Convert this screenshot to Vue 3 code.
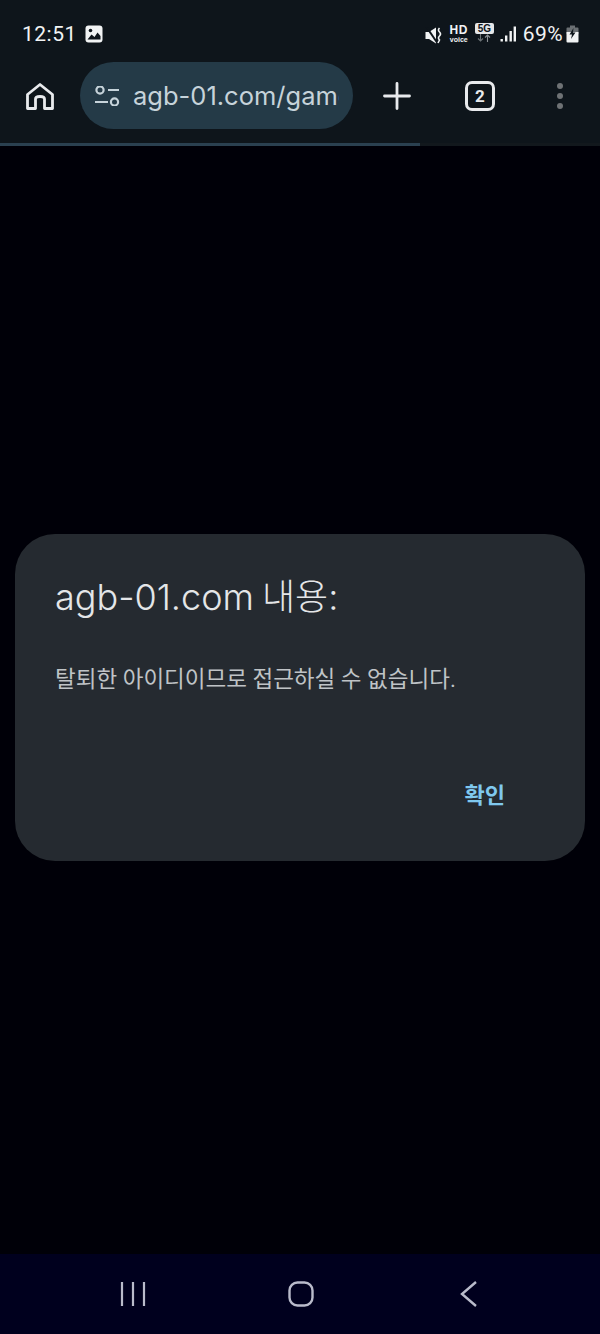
<template>
  <div class="screen">
    <header class="chrome">
      <!-- Status bar -->
      <div class="status-bar">
        <div class="status-left">
          <span class="clock">12:51</span>
          <svg class="gallery" width="18" height="18" viewBox="0 0 18 18">
            <rect x="0.5" y="0.5" width="17" height="17" rx="3" fill="#f1f3f4" />
            <circle cx="5.5" cy="5.5" r="1.8" fill="#0e151b" />
            <path d="M2.5 14.5 L6.5 9.5 L9.5 12 L12.5 7.5 L15.5 11 V14.5 Z" fill="#0e151b" />
          </svg>
        </div>
        <div class="status-right">
          <svg class="mute" width="17" height="17" viewBox="0 0 17 17">
            <path d="M0.5 5 H4 L11 0.5 V16.5 L4 12 H0.5 Z" fill="#f1f3f4" />
            <path d="M1.5 0 L12 15.5" stroke="#0e151b" stroke-width="2" />
            <path d="M14.5 1 Q12.5 3 14.5 5 T14.5 9 T14.5 13 L13 16" stroke="#f1f3f4" stroke-width="1.6" fill="none" />
          </svg>
          <div class="hd">
            <span class="hd-top">HD</span>
            <span class="hd-bottom">voice</span>
          </div>
          <div class="net">
            <span class="net-label">5G</span>
            <svg width="16" height="8" viewBox="0 0 16 8">
              <path d="M4.5 0 V7 M2 4.5 L4.5 7 L7 4.5" stroke="#6c7276" stroke-width="1.1" fill="none" />
              <path d="M11.5 8 V1 M9 3.5 L11.5 1 L14 3.5" stroke="#8b9094" stroke-width="1.1" fill="none" />
            </svg>
          </div>
          <svg class="signal" width="16" height="16" viewBox="0 0 16 16">
            <rect x="0.5" y="13" width="2.4" height="2.5" fill="#f1f3f4" />
            <rect x="5" y="9.5" width="2.4" height="6" fill="#f1f3f4" />
            <rect x="9.5" y="5" width="2.4" height="10.5" fill="#f1f3f4" />
            <rect x="13.6" y="0.5" width="2.4" height="15" fill="#f1f3f4" />
          </svg>
          <span class="percent">69%</span>
          <svg class="battery" width="13" height="18" viewBox="0 0 13 18">
            <path d="M4 0.5 H9 V2.5 H11.5 Q12.5 2.5 12.5 3.5 V9 H0.5 V3.5 Q0.5 2.5 1.5 2.5 H4 Z" fill="#6a6f73" />
            <path d="M0.5 7 H12.5 V16.5 Q12.5 17.5 11.5 17.5 H1.5 Q0.5 17.5 0.5 16.5 Z" fill="#f1f3f4" />
            <path d="M7.5 3 L3.5 9.5 H6 L5 14 L9.5 7.5 H7 Z" fill="#0e151b" />
          </svg>
        </div>
      </div>

      <!-- Browser toolbar -->
      <div class="toolbar">
        <svg class="home" width="30" height="30" viewBox="0 0 30 30">
          <path d="M15 3.5 L27.5 13.5 V27.5 H19.5 V18 Q19.5 15.5 15 15.5 Q10.5 15.5 10.5 18 V27.5 H2.5 V13.5 Z" fill="none" stroke="#e8eaed" stroke-width="2.8" stroke-linejoin="round" />
        </svg>
        <div class="omnibox">
          <svg width="26" height="20" viewBox="0 0 26 20">
            <circle cx="6" cy="4" r="3.6" fill="none" stroke="#c6d3da" stroke-width="2.2" />
            <path d="M14 4 H25" stroke="#c6d3da" stroke-width="2.2" />
            <path d="M1 16 H14" stroke="#c6d3da" stroke-width="2.2" />
            <circle cx="20.5" cy="16" r="3.6" fill="none" stroke="#c6d3da" stroke-width="2.2" />
          </svg>
          <span class="url">agb-01.com/game</span>
        </div>
        <svg class="plus" width="28" height="28" viewBox="0 0 28 28">
          <path d="M14 1.5 V26.5 M1.5 14 H26.5" stroke="#e8eaed" stroke-width="2.8" stroke-linecap="round" />
        </svg>
        <div class="tabs">2</div>
        <div class="kebab">
          <i></i>
          <i></i>
          <i></i>
        </div>
      </div>

      <div class="progress"><div class="progress-fill"></div></div>
    </header>

    <!-- Page with js alert -->
    <main class="page">
      <div class="dialog">
        <h1 class="dialog-title">agb-01.com 내용:</h1>
        <p class="dialog-text">탈퇴한 아이디이므로 접근하실 수 없습니다.</p>
        <div class="dialog-actions">
          <button class="ok-btn">확인</button>
        </div>
      </div>
    </main>

    <!-- Android nav bar -->
    <footer class="nav-bar">
      <svg width="26" height="26" viewBox="0 0 26 26">
        <path d="M2 1 V25 M13 1 V25 M24 1 V25" stroke="#b9bbcb" stroke-width="2.2" />
      </svg>
      <svg class="nav-home" width="26" height="26" viewBox="0 0 26 26">
        <rect x="1.5" y="1.5" width="23" height="23" rx="8" fill="none" stroke="#b9bbcb" stroke-width="2.4" />
      </svg>
      <svg class="nav-back" width="18" height="28" viewBox="0 0 18 28">
        <path d="M16 2 L2 14 L16 26" fill="none" stroke="#b9bbcb" stroke-width="2.4" />
      </svg>
    </footer>
  </div>
</template>

<script setup>
</script>

<style>
html, body {
  margin: 0;
  background: #000008;
}
</style>

<style scoped>
.screen {
  width: 600px;
  height: 1334px;
  display: flex;
  flex-direction: column;
  background: #000008;
  font-family: Roboto, "Noto Sans CJK KR", sans-serif;
  overflow: hidden;
}

.chrome {
  background: #0e151b;
}

.status-bar {
  height: 62px;
  box-sizing: border-box;
  padding: 22px 21px 0 22px;
  display: flex;
  justify-content: space-between;
  align-items: flex-start;
  color: #f1f3f4;
}

.status-left {
  display: flex;
  align-items: center;
  gap: 8px;
}

.clock {
  font-size: 21px;
  line-height: 24px;
  letter-spacing: 0.5px;
}

.status-right {
  display: flex;
  align-items: center;
}

.mute {
  margin-top: 3px;
}

.hd {
  display: flex;
  flex-direction: column;
  align-items: center;
  width: 18px;
  margin-left: 8px;
  font-family: "Liberation Sans", sans-serif;
  font-weight: 700;
}

.hd-top {
  font-size: 12px;
  line-height: 11px;
  letter-spacing: 0.6px;
}

.hd-bottom {
  font-size: 7px;
  line-height: 7px;
}

.net {
  display: flex;
  flex-direction: column;
  align-items: center;
  width: 19px;
  margin-left: 7px;
  margin-top: -4px;
}

.net-label {
  width: 19px;
  height: 11px;
  border-radius: 2px;
  background: #e4e6e8;
  color: #0e151b;
  font-family: "Liberation Sans", sans-serif;
  font-weight: 700;
  font-size: 10px;
  line-height: 11px;
  text-align: center;
}

.signal {
  margin-left: 6px;
}

.percent {
  margin-left: 7px;
  font-size: 21px;
  line-height: 24px;
  letter-spacing: 0.4px;
}

.battery {
  margin-left: 3px;
}

.toolbar {
  height: 81px;
  box-sizing: border-box;
  display: flex;
  align-items: center;
  padding-bottom: 14px;
}

.home {
  margin-left: 25px;
}

.omnibox {
  width: 273px;
  height: 67px;
  margin-left: 25px;
  box-sizing: border-box;
  padding-left: 14px;
  border-radius: 34px;
  background: #243a47;
  display: flex;
  align-items: center;
  gap: 13px;
  overflow: hidden;
}

.url {
  width: 206px;
  overflow: hidden;
  white-space: nowrap;
  font-family: Inter, Roboto, sans-serif;
  font-size: 25.5px;
  font-weight: 400;
  color: #c6d3da;
}

.plus {
  margin-left: 30px;
}

.tabs {
  width: 24px;
  height: 24px;
  margin-left: 54px;
  border: 3px solid #e8eaed;
  border-radius: 7px;
  color: #e8eaed;
  font-size: 17px;
  font-weight: 700;
  line-height: 24px;
  text-align: center;
}

.kebab {
  margin-left: 62px;
  display: flex;
  flex-direction: column;
  gap: 4px;
}

.kebab i {
  display: block;
  width: 6px;
  height: 6px;
  border-radius: 50%;
  background: #6f7275;
}

.progress {
  height: 3px;
  background: #12181d;
}

.progress-fill {
  width: 420px;
  height: 3px;
  background: #2a4050;
}

.page {
  flex: 1;
  padding: 388px 15px 0;
}

.dialog {
  height: 327px;
  box-sizing: border-box;
  padding: 40px 40px 0;
  border-radius: 40px;
  background: #252a30;
  display: flex;
  flex-direction: column;
}

.dialog-title {
  margin: 0;
  font-family: Inter, "Noto Sans CJK KR", sans-serif;
  font-size: 36px;
  font-weight: 300;
  line-height: 46px;
  word-spacing: -2px;
  color: #e4e6e8;
}

.dialog-text {
  margin: 44px 0 0;
  font-size: 22.5px;
  line-height: 30px;
  font-weight: 400;
  color: #bfc3c6;
}

.dialog-actions {
  margin-top: auto;
  padding: 0 40px 48px 0;
  display: flex;
  justify-content: flex-end;
}

.ok-btn {
  padding: 0;
  border: 0;
  background: none;
  font-family: inherit;
  font-size: 22px;
  line-height: 34px;
  font-weight: 700;
  color: #7fc8ee;
}

.nav-bar {
  height: 80px;
  box-sizing: border-box;
  padding-left: 120px;
  background: #00001e;
  display: flex;
  align-items: center;
}

.nav-home {
  margin-left: 142px;
}

.nav-back {
  margin-left: 146px;
}
</style>
